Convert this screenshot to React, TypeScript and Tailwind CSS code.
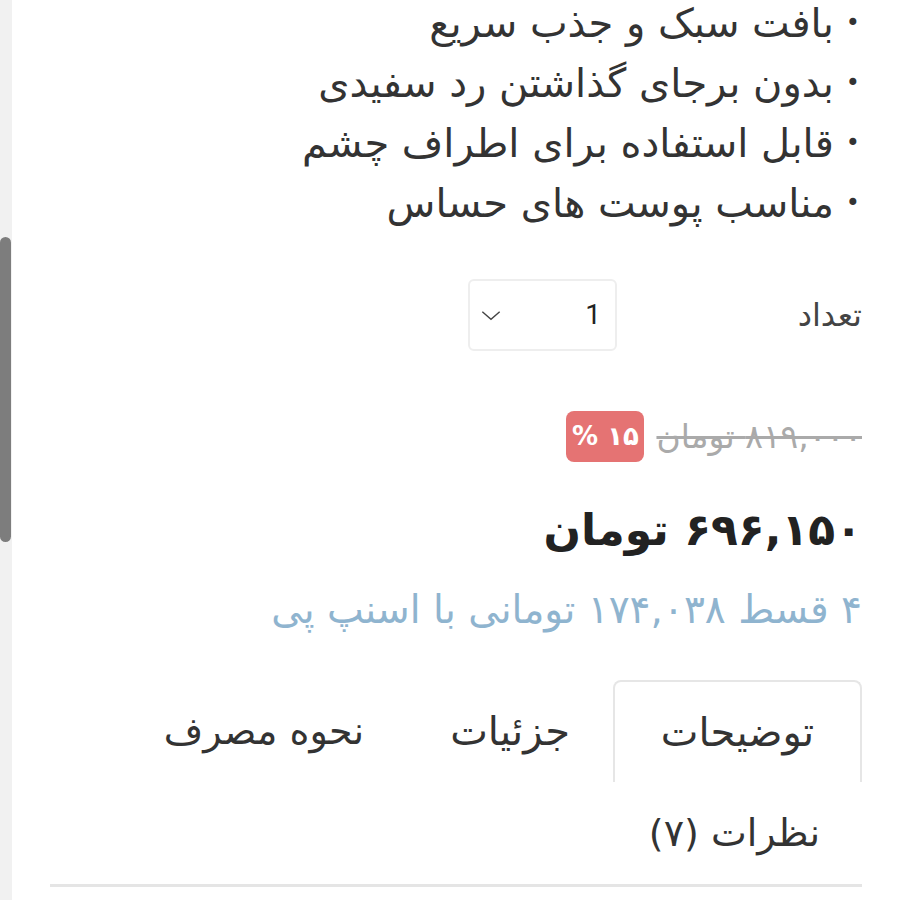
const FEATURES = [
  "بافت سبک و جذب سریع",
  "بدون برجای گذاشتن رد سفیدی",
  "قابل استفاده برای اطراف چشم",
  "مناسب پوست های حساس",
];

function ChevronDown() {
  return (
    <svg width="26" height="26" viewBox="0 0 24 24" fill="none" stroke="#444" strokeWidth="1.3">
      <path d="M4 9l8 7 8-7" />
    </svg>
  );
}

export default function App() {
  return (
    <div className="flex h-[900px] w-[900px] overflow-hidden bg-white">
      {/* fake scrollbar */}
      <div className="w-[12px] shrink-0 bg-[#f1f1f1] pt-[237px]">
        <div className="h-[305px] w-[11px] rounded-full bg-[#7d7d7d]" />
      </div>

      <main
        dir="rtl"
        className="flex-1 pr-[38px] pl-[38px] text-[#333] [font-family:'DejaVu_Sans',sans-serif]"
      >
        <ul className="-mt-[7px] flex flex-col text-[40px] leading-[60px] text-[#333]">
          {FEATURES.map((f) => (
            <li key={f} className="flex items-center gap-[12px] pr-[2px]">
              <span className="text-[24px]">•</span>
              <span>{f}</span>
            </li>
          ))}
        </ul>

        <div className="mt-[46px] flex items-center">
          <span className="w-[67px] text-[32px] text-[#444]">تعداد</span>
          <div className="mr-[178px] flex h-[72px] w-[149px] items-center justify-between rounded-[6px] border-2 border-[#eeeeee] pr-[14px] pl-[8px]">
            <span className="text-[28px] text-[#222] [font-family:'Roboto',sans-serif]">1</span>
            <ChevronDown />
          </div>
        </div>

        <div className="mt-[60px] flex items-center gap-[12px]">
          <span className="text-[33px] leading-[51px] text-[#aaaaaa] line-through decoration-[#aaaaaa]">
            ۸۱۹,۰۰۰ تومان
          </span>
          <span className="flex h-[51px] w-[78px] items-center justify-center rounded-[8px] bg-[#e57373] text-[26px] font-bold text-white">
            ۱۵ %
          </span>
        </div>

        <div className="mt-[38px] text-[44px] font-bold leading-[60px] text-[#222]">
          ۶۹۶,۱۵۰ تومان
        </div>

        <div className="mt-[25px] text-[39px] leading-[50px] text-[#8fb4cf]">
          ۴ قسط ۱۷۴,۰۳۸ تومانی با اسنپ پی
        </div>

        <div className="mt-[45px] flex flex-wrap">
          <div className="flex h-[102px] w-[249px] items-center justify-center rounded-t-[8px] border-2 border-b-0 border-[#e6e6e6] text-[40px] text-[#333]">
            توضیحات
          </div>
          <div className="flex h-[102px] items-center px-[43px] text-[40px] text-[#333]">جزئیات</div>
          <div className="flex h-[102px] items-center px-[43px] text-[38px] text-[#333]">نحوه مصرف</div>
          <div className="flex h-[102px] w-full items-center pr-[42px] text-[38px] text-[#333]">
            نظرات (۷)
          </div>
        </div>
        <div className="h-[3px] w-full bg-[#e5e5e5]" />
      </main>
    </div>
  );
}
